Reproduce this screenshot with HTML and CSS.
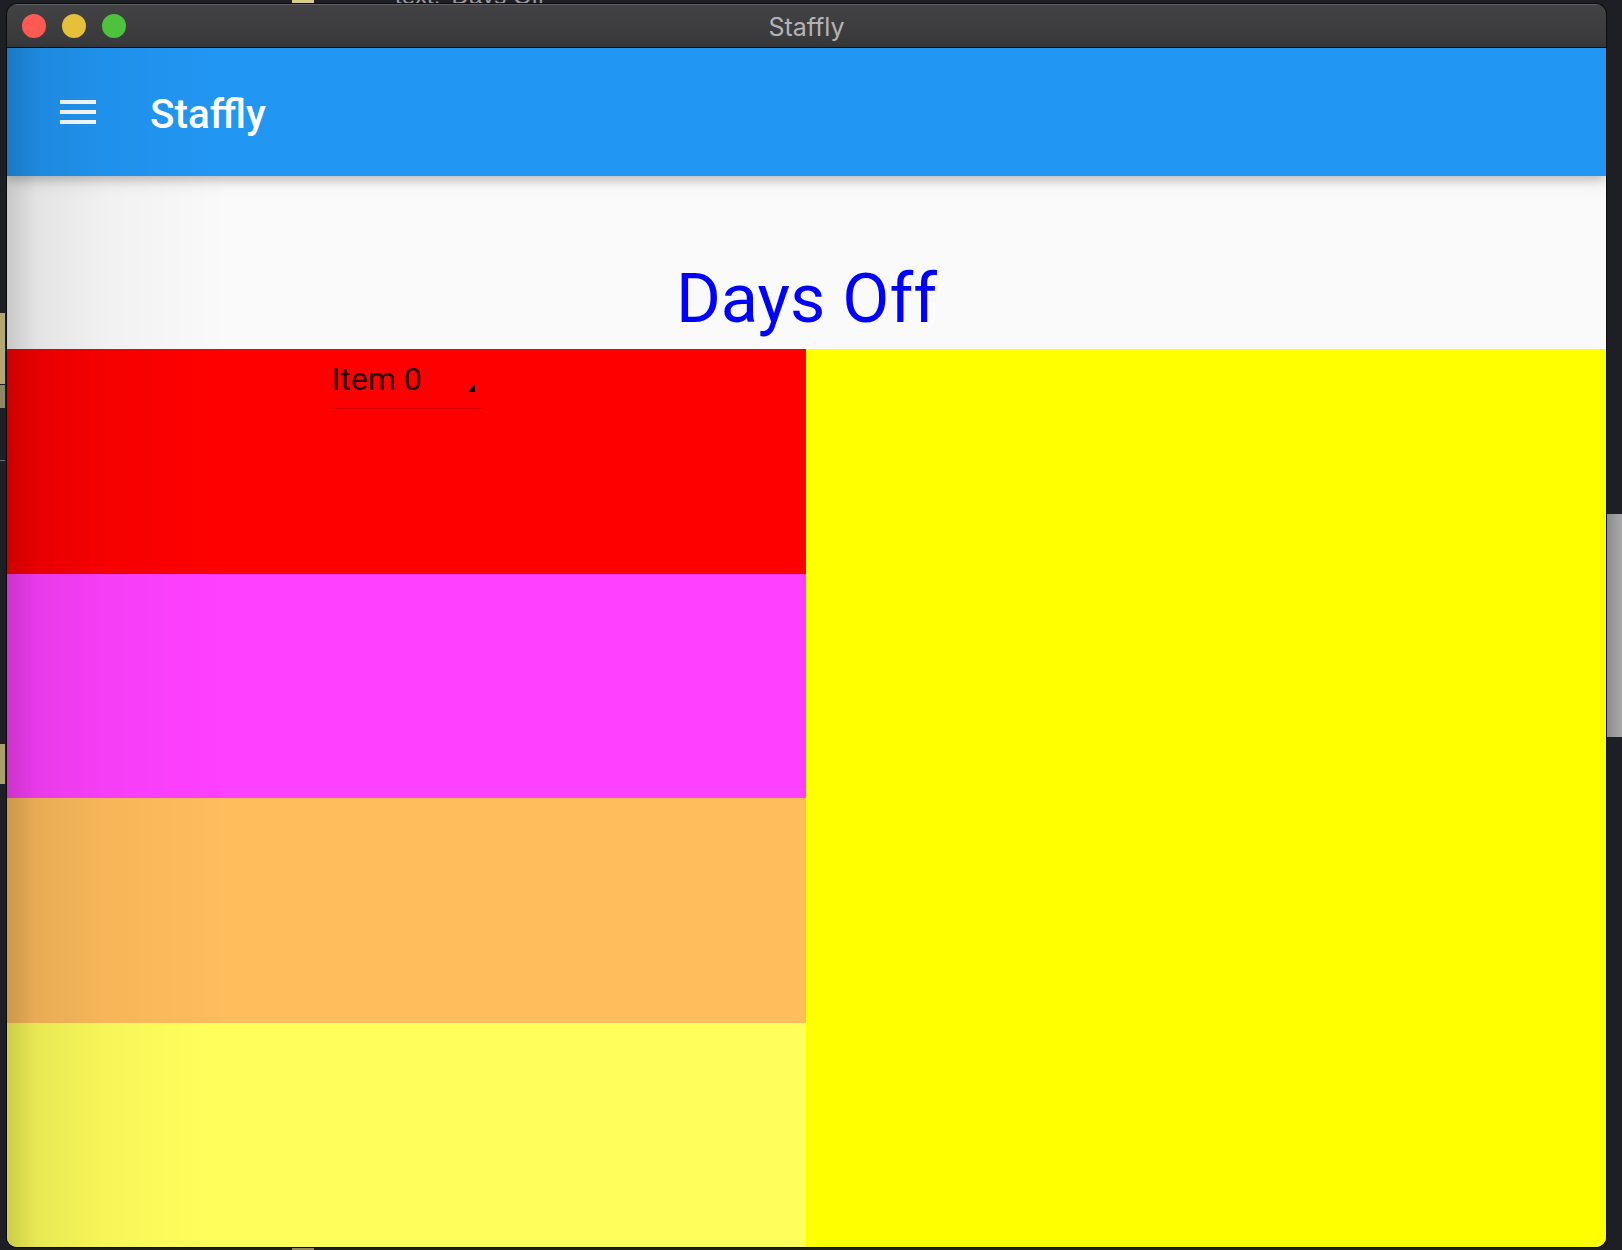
FILE: index.html
```html
<!DOCTYPE html>
<html lang="en">
<head>
<meta charset="utf-8">
<title>Staffly</title>
<link rel="stylesheet" href="styles.css">
</head>
<body>
  <div class="desk-yellow-top"></div>
  <div class="desk-text-top">text: 'Days Off</div>
  <div class="desk-bar desk-bar-a"></div>
  <div class="desk-bar desk-bar-b"></div>
  <div class="desk-line"></div>
  <div class="desk-bar desk-bar-c"></div>
  <div class="desk-scroll"></div>
  <div class="desk-yellow-bottom"></div>

  <div class="window">
    <div class="titlebar">
      <div class="lights">
        <span class="light red"></span>
        <span class="light yellow"></span>
        <span class="light green"></span>
      </div>
      <div class="win-title">Staffly</div>
      <div></div>
    </div>
    <div class="app">
      <header class="appbar">
        <svg class="menu-icon" viewBox="0 0 24 24" width="48" height="48" aria-hidden="true">
          <path fill="#fff" d="M3 18h18v-2H3v2zm0-5h18v-2H3v2zm0-7v2h18V6H3z"/>
        </svg>
        <h1 class="app-title">Staffly</h1>
      </header>
      <main class="content">
        <div class="heading">Days Off</div>
        <div class="board">
          <div class="left-col">
            <div class="block block-red">
              <div class="dropdown">
                <span class="dd-text">Item 0</span>
                <svg class="dd-arrow" viewBox="0 0 7 8" width="7" height="8" aria-hidden="true">
                  <polygon points="7,0 7,8 0,8" fill="#000"/>
                </svg>
              </div>
            </div>
            <div class="block block-magenta"></div>
            <div class="block block-orange"></div>
            <div class="block block-lightyellow"></div>
          </div>
          <div class="right-col"></div>
        </div>
      </main>
      <div class="edge-shade"></div>
    </div>
  </div>
</body>
</html>
```

FILE: styles.css
```css
* { box-sizing: border-box; }

html, body {
  margin: 0;
  width: 1622px;
  height: 1250px;
  overflow: hidden;
}

body {
  position: relative;
  background: #1d1f25;
  padding: 4px 16px 3px 7px;
  font-family: Roboto, "Noto Sans", sans-serif;
}

/* desktop bits behind the window */
.desk-yellow-top {
  position: absolute; left: 292px; top: 0; width: 22px; height: 3px;
  background: #d9cf8a;
}
.desk-text-top {
  position: absolute; left: 395px; top: -16px;
  font-family: "Liberation Sans", Arial, sans-serif; font-size: 24px;
  line-height: 1;
  color: #9a9ca2; white-space: pre;
}
.desk-bar { position: absolute; left: 0; width: 5px; }
.desk-bar-a { top: 313px; height: 71px; background: #b3a86f; }
.desk-bar-b { top: 385px; height: 23px; background: #8c875f; }
.desk-bar-c { top: 744px; height: 40px; background: #a99f69; }
.desk-line { position: absolute; left: 0; top: 460px; width: 5px; height: 1px; background: #6a7080; }
.desk-scroll {
  position: absolute; left: 1607px; top: 514px; width: 15px; height: 223px;
  background: linear-gradient(to right, #8c8c8c, #a9a9a9);
}
.desk-yellow-bottom {
  position: absolute; left: 292px; top: 1247px; width: 22px; height: 3px;
  background: #8f8868;
}

/* window */
.window {
  position: relative;
  width: 1599px;
  height: 1243px;
  border-radius: 10px;
  overflow: hidden;
  display: flex;
  flex-direction: column;
  box-shadow: 0 0 0 1px #0c0c0e;
}

.titlebar {
  height: 44px;
  flex: none;
  display: grid;
  grid-template-columns: 1fr auto 1fr;
  align-items: center;
  background: linear-gradient(#424244, #39393b);
  border-top: 1px solid #606062;
  border-bottom: 1px solid #111113;
}

.lights { display: flex; gap: 16px; padding-left: 15px; }
.light { width: 24px; height: 24px; border-radius: 50%; display: block; }
.light.red { background: #fe5a52; }
.light.yellow { background: #e6c03b; }
.light.green { background: #4ec23c; }

.win-title {
  font-family: Inter, "Open Sans", sans-serif;
  font-size: 25px;
  color: #b4b4b6;
  padding-top: 1px;
}

.app {
  position: relative;
  flex: 1;
  display: flex;
  flex-direction: column;
}

.appbar {
  position: relative;
  z-index: 2;
  height: 128px;
  flex: none;
  background: #2196f3;
  display: flex;
  align-items: center;
  padding-left: 47px;
  box-shadow: 0 3px 10px rgba(0,0,0,0.22), 0 6px 18px rgba(0,0,0,0.08);
}

.menu-icon { display: block; flex: none; }

.app-title {
  margin: 0 0 0 48px;
  font-family: Roboto, sans-serif;
  font-weight: 500;
  font-size: 40.5px;
  color: #fff;
  line-height: 1;
  padding-top: 4px;
}

.content {
  flex: 1;
  display: flex;
  flex-direction: column;
  background: #fafafa;
}

.heading {
  height: 173px;
  flex: none;
  padding-top: 82px;
  text-align: center;
  font-size: 68.5px;
  font-weight: 400;
  color: #0000ff;
  line-height: normal;
}

.board {
  flex: 1;
  display: grid;
  grid-template-columns: 799px 1fr;
}

.left-col {
  display: grid;
  grid-template-rows: repeat(4, 1fr);
}

.block { display: flex; justify-content: center; }
.block-red { background: #ff0000; }
.block-magenta { background: #ff40ff; }
.block-orange { background: #ffbd5c; }
.block-lightyellow { background: #ffff5c; }

.right-col { background: #ffff00; }

.dropdown {
  align-self: flex-start;
  margin-top: 11px;
  width: 150px;
  display: flex;
  align-items: flex-end;
  justify-content: space-between;
  padding: 0 7px 10px 0;
  border-bottom: 1px solid rgba(0,0,0,0.14);
}

.dd-text {
  font-size: 32px;
  line-height: normal;
  color: rgba(0,0,0,0.87);
}

.dd-arrow { display: block; margin-bottom: 6px; }

.edge-shade {
  position: absolute;
  left: 0; top: 0; bottom: 0;
  width: 220px;
  z-index: 3;
  pointer-events: none;
  background: linear-gradient(to right,
    rgba(0,0,0,0.2) 0,
    rgba(0,0,0,0.09) 30px,
    rgba(0,0,0,0.035) 100px,
    rgba(0,0,0,0) 220px);
}
```
